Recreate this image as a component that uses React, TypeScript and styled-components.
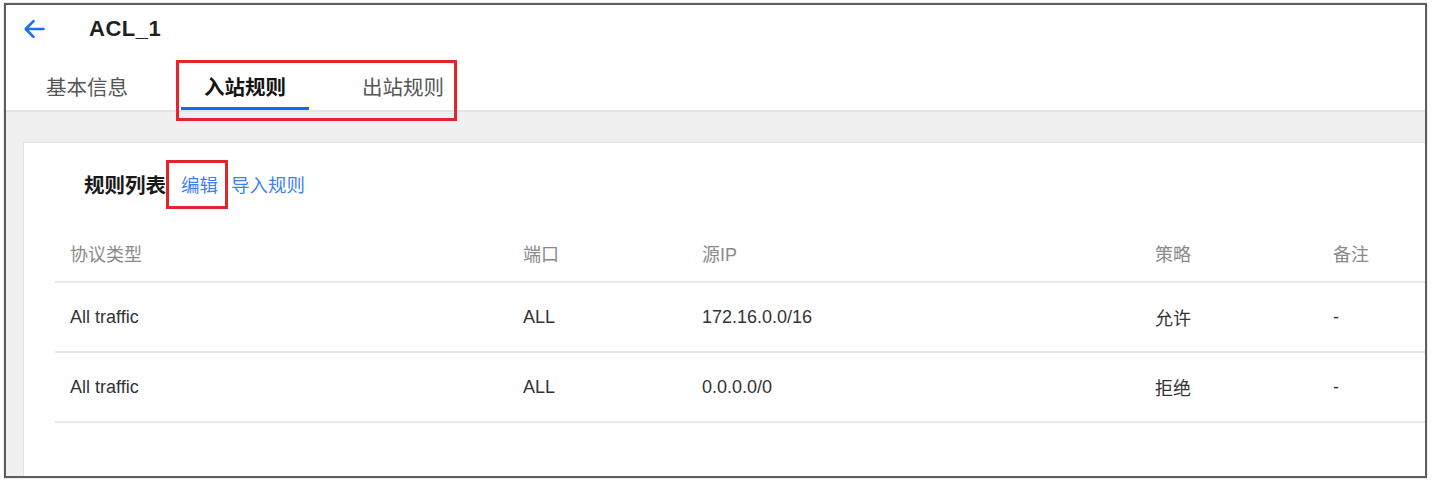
import React from "react";
import styled, { createGlobalStyle } from "styled-components";

const Global = createGlobalStyle`
  html, body { margin: 0; padding: 0; background: #ffffff; }
  body { font-family: "Liberation Sans", "Noto Sans CJK SC", sans-serif; }
  * { box-sizing: border-box; }
`;

const Page = styled.div`
  width: 1432px;
  height: 483px;
  padding: 3px 0 0 4px;
  background: #ffffff;
`;

const Frame = styled.div`
  position: relative;
  width: 1423px;
  height: 475px;
  border: 2px solid #5c5c5c;
  box-shadow: 0 0 1px rgba(0, 0, 0, 0.45);
  overflow: hidden;
  display: flex;
  flex-direction: column;
  background: #ffffff;
`;

const Header = styled.div`
  padding-left: 17px;
  display: flex;
  flex-direction: column;
  background: #ffffff;
`;

const TitleRow = styled.div`
  height: 48px;
  display: flex;
  align-items: center;
`;

const BackButton = styled.button`
  border: none;
  background: none;
  padding: 0;
  margin: 0;
  width: 22px;
  height: 20px;
  display: flex;
  align-items: center;
  justify-content: center;
  cursor: pointer;
`;

const Title = styled.h1`
  margin: 0 0 0 44px;
  font-size: 22px;
  font-weight: 700;
  color: #1f1f1f;
  letter-spacing: 0.5px;
`;

const Tabs = styled.div`
  display: flex;
  gap: 30px;
`;

const Tab = styled.div<{ $active?: boolean }>`
  padding: 24px 23px 8px;
  line-height: 22px;
  font-size: 20.5px;
  font-weight: ${(p) => (p.$active ? 700 : 400)};
  color: ${(p) => (p.$active ? "#141414" : "#555555")};
  border-bottom: 3px solid ${(p) => (p.$active ? "#1668f0" : "transparent")};
  cursor: pointer;
`;

const Highlight = styled.div`
  position: absolute;
  left: 170px;
  top: 55px;
  width: 281px;
  height: 61px;
  border: 3px solid #e3242b;
  pointer-events: none;
`;

const Body = styled.div`
  flex: 1;
  background: #f0f0f0;
  border-top: 2px solid #e4e4e4;
  padding: 30px 0 0 17px;
  display: flex;
`;

const Card = styled.div`
  flex: 1;
  background: #ffffff;
  border-top: 1px solid #e2e2e2;
  border-left: 1px solid #e2e2e2;
  padding-top: 16px;
`;

const CardTitleRow = styled.div`
  height: 50px;
  padding-left: 60px;
  display: flex;
  align-items: center;
`;

const CardTitle = styled.span`
  font-size: 20.5px;
  font-weight: 700;
  color: #1a1a1a;
`;

const LinkBox = styled.span`
  border: 3px solid #e3242b;
  padding: 8px 7px 9px 12px;
  display: inline-flex;
  align-items: center;
  margin-right: 3px;
`;

const Link = styled.a`
  font-size: 18.5px;
  color: #3f7ff7;
  text-decoration: none;
  cursor: pointer;
`;

const Table = styled.div`
  margin: 16px 0 0 31px;
`;

const Row = styled.div<{ $head?: boolean }>`
  display: grid;
  grid-template-columns: 453px 179px 453px 178px 1fr;
  height: ${(p) => (p.$head ? "58px" : "70px")};
  border-bottom: 2px solid #e8e8e8;
  align-items: center;
`;

const Cell = styled.div<{ $head?: boolean }>`
  padding-left: 15px;
  font-size: 18px;
  color: ${(p) => (p.$head ? "#8a8a8a" : "#333333")};
  white-space: nowrap;
`;

const BackArrow = () => (
  <svg width="22" height="20" viewBox="0 0 22 20" fill="none">
    <path
      d="M20.5 10H3M10.5 2.2L2.7 10l7.8 7.8"
      stroke="#1a6ff0"
      strokeWidth="2.6"
      strokeLinecap="round"
      strokeLinejoin="round"
    />
  </svg>
);

const headers = ["协议类型", "端口", "源IP", "策略", "备注"];
const rows = [
  ["All traffic", "ALL", "172.16.0.0/16", "允许", "-"],
  ["All traffic", "ALL", "0.0.0.0/0", "拒绝", "-"],
];

export default function App() {
  return (
    <>
      <Global />
      <Page>
        <Frame>
          <Header>
            <TitleRow>
              <BackButton aria-label="返回">
                <BackArrow />
              </BackButton>
              <Title>ACL_1</Title>
            </TitleRow>
            <Tabs>
              <Tab>基本信息</Tab>
              <Tab $active>入站规则</Tab>
              <Tab>出站规则</Tab>
            </Tabs>
          </Header>
          <Highlight />
          <Body>
            <Card>
              <CardTitleRow>
                <CardTitle>规则列表</CardTitle>
                <LinkBox>
                  <Link>编辑</Link>
                </LinkBox>
                <Link>导入规则</Link>
              </CardTitleRow>
              <Table>
                <Row $head>
                  {headers.map((h) => (
                    <Cell $head key={h}>
                      {h}
                    </Cell>
                  ))}
                </Row>
                {rows.map((r, i) => (
                  <Row key={i}>
                    {r.map((c, j) => (
                      <Cell key={j}>{c}</Cell>
                    ))}
                  </Row>
                ))}
              </Table>
            </Card>
          </Body>
        </Frame>
      </Page>
    </>
  );
}
